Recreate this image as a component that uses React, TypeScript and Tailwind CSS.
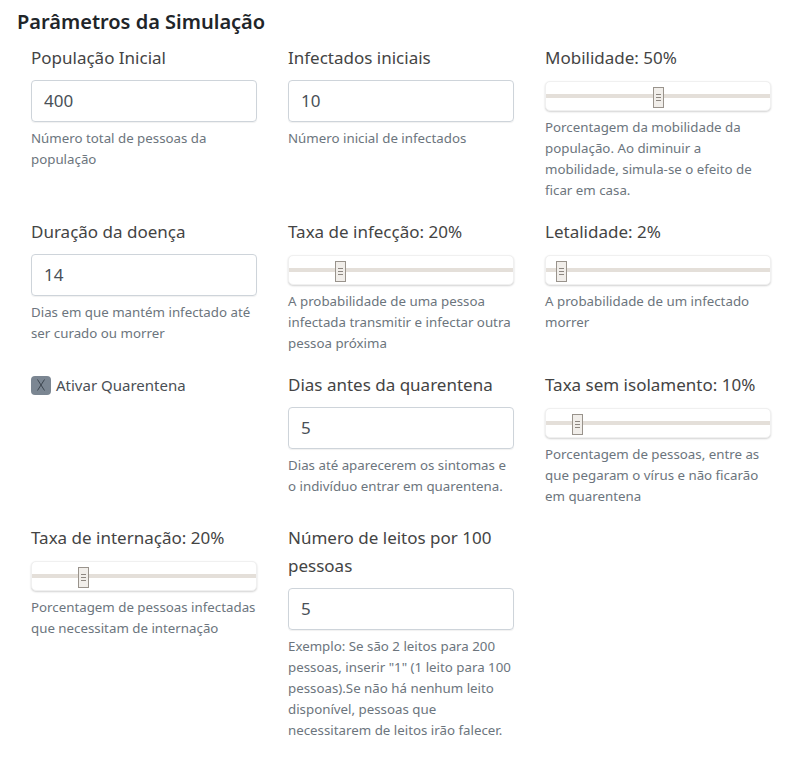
const font = { fontFamily: '"Noto Sans", "Open Sans", sans-serif' };

type Field =
  | { kind: "input"; label: string; value: string; help: string }
  | { kind: "slider"; label: string; value: number; help: string }
  | { kind: "check"; label: string }
  | { kind: "empty" };

const fields: Field[] = [
  { kind: "input", label: "População Inicial", value: "400", help: "Número total de pessoas da população" },
  { kind: "input", label: "Infectados iniciais", value: "10", help: "Número inicial de infectados" },
  {
    kind: "slider",
    label: "Mobilidade: 50%",
    value: 50,
    help: "Porcentagem da mobilidade da população. Ao diminuir a mobilidade, simula-se o efeito de ficar em casa.",
  },
  { kind: "input", label: "Duração da doença", value: "14", help: "Dias em que mantém infectado até ser curado ou morrer" },
  {
    kind: "slider",
    label: "Taxa de infecção: 20%",
    value: 20,
    help: "A probabilidade de uma pessoa infectada transmitir e infectar outra pessoa próxima",
  },
  { kind: "slider", label: "Letalidade: 2%", value: 2, help: "A probabilidade de um infectado morrer" },
  { kind: "check", label: "Ativar Quarentena" },
  {
    kind: "input",
    label: "Dias antes da quarentena",
    value: "5",
    help: "Dias até aparecerem os sintomas e o indivíduo entrar em quarentena.",
  },
  {
    kind: "slider",
    label: "Taxa sem isolamento: 10%",
    value: 10,
    help: "Porcentagem de pessoas, entre as que pegaram o vírus e não ficarão em quarentena",
  },
  {
    kind: "slider",
    label: "Taxa de internação: 20%",
    value: 20,
    help: "Porcentagem de pessoas infectadas que necessitam de internação",
  },
  {
    kind: "input",
    label: "Número de leitos por 100 pessoas",
    value: "5",
    help: 'Exemplo: Se são 2 leitos para 200 pessoas, inserir "1" (1 leito para 100 pessoas).Se não há nenhum leito disponível, pessoas que necessitarem de leitos irão falecer.',
  },
  { kind: "empty" },
];

function Slider({ value }: { value: number }) {
  return (
    <div className="relative mt-[9px] h-[30px] rounded-[5px] border border-[#f0f0f0] bg-white shadow-[0_1px_2px_rgba(0,0,0,0.18)]">
      <div className="absolute left-0 right-0 top-[12px] h-[4px] bg-[#e4dfd9]" />
      <div
        className="absolute top-[5px] flex h-[21px] w-[11px] flex-col items-center justify-center gap-[2px] border border-[#99938c] bg-[#f1eeea]"
        style={{ left: `calc(6px + (100% - 23px) * ${value / 100})` }}
      >
        <span className="h-px w-[5px] bg-[#8d8781]" />
        <span className="h-px w-[5px] bg-[#8d8781]" />
        <span className="h-px w-[5px] bg-[#8d8781]" />
      </div>
    </div>
  );
}

function Help({ text }: { text: string }) {
  return <p className="mt-[6px] text-[13.3px] leading-[21px] text-[#6c757d]">{text}</p>;
}

export default function App() {
  return (
    <div className="min-h-[773px] w-[793px] bg-white pb-6" style={font}>
      <h2 className="pl-[17px] pt-[6px] text-[20px] font-semibold leading-[32px] text-[#212529]">
        Parâmetros da Simulação
      </h2>
      <div className="mt-[6px] grid grid-cols-[226px_226px_226px] gap-x-[31px] gap-y-[17px] pl-[31px]">
        {fields.map((f, i) => {
          if (f.kind === "empty") return <div key={i} />;
          if (f.kind === "check")
            return (
              <div key={i} className="flex h-[28px] items-center gap-[5px]">
                <span className="flex h-[19px] w-[20px] items-center justify-center rounded-[4px] bg-[#7b8692]">
                  <svg width="8" height="12" viewBox="0 0 8 12" fill="none" stroke="#3d4650" strokeWidth="1">
                    <path d="M0.5 0.5 L7.5 11.5 M7.5 0.5 L0.5 11.5" />
                  </svg>
                </span>
                <span className="text-[15px] text-[#4a4f55]">{f.label}</span>
              </div>
            );
          return (
            <div key={i}>
              <label className="block text-[17px] leading-[28px] text-[#444]">{f.label}</label>
              {f.kind === "input" ? (
                <div className="mt-[8px] flex h-[42px] items-center rounded-[4px] border border-[#ced4da] px-[12px] text-[17px] text-[#495057] shadow-[0_1px_1px_rgba(0,0,0,0.06)]">
                  {f.value}
                </div>
              ) : (
                <Slider value={f.value} />
              )}
              <Help text={f.help} />
            </div>
          );
        })}
      </div>
    </div>
  );
}
